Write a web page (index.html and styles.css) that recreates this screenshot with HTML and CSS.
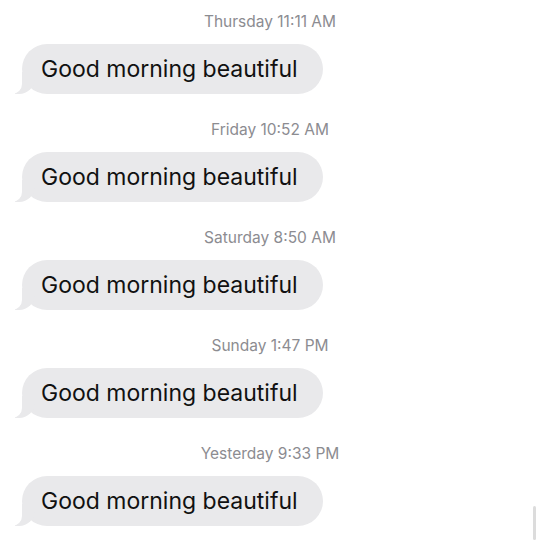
FILE: index.html
```html
<!DOCTYPE html>
<html lang="en">
<head>
  <meta charset="UTF-8" />
  <meta name="viewport" content="width=device-width, initial-scale=1" />
  <title>Messages</title>
  <link rel="stylesheet" href="styles.css">
</head>
<body>
  <div class="thread">
    <div class="group">
      <p class="stamp">Thursday 11:11 AM</p>
      <div class="bubble">Good morning beautiful</div>
    </div>
    <div class="group">
      <p class="stamp">Friday 10:52 AM</p>
      <div class="bubble">Good morning beautiful</div>
    </div>
    <div class="group">
      <p class="stamp">Saturday 8:50 AM</p>
      <div class="bubble">Good morning beautiful</div>
    </div>
    <div class="group">
      <p class="stamp">Sunday 1:47 PM</p>
      <div class="bubble">Good morning beautiful</div>
    </div>
    <div class="group">
      <p class="stamp">Yesterday 9:33 PM</p>
      <div class="bubble">Good morning beautiful</div>
    </div>
  </div>
  <div class="scrollbar"></div>
</body>
</html>
```

FILE: styles.css
```css
body {
  margin: 0;
  background-color: #fff;
  font-family: Inter, 'Liberation Sans', Arial, sans-serif;
  height: 540px;
  overflow: hidden;
}
.thread {
  display: flex;
  flex-direction: column;
  padding: 13px 0 0 22px;
}
.group {
  display: flex;
  flex-direction: column;
  align-items: flex-start;
  margin-bottom: 27px;
}
.stamp {
  margin: 0 0 13px;
  align-self: stretch;
  padding-right: 22px;
  text-align: center;
  font-size: 15.5px;
  line-height: 18px;
  color: #8c8c91;
}
.bubble {
  position: relative;
  height: 50px;
  line-height: 50px;
  padding: 0 25px 0 19px;
  border-radius: 25px;
  background-color: #e9e9eb;
  color: #111;
  font-size: 23px;
}
/* tail */
.bubble::before,
.bubble::after {
  content: "";
  position: absolute;
  bottom: 0;
  height: 22px;
}
.bubble::before {
  left: -7px;
  width: 20px;
  background-color: #e9e9eb;
  border-bottom-right-radius: 16px;
}
.bubble::after {
  left: -26px;
  width: 26px;
  background-color: #fff;
  border-bottom-right-radius: 10px;
}
.scrollbar {
  position: fixed;
  right: 4px;
  bottom: 0;
  width: 3px;
  height: 34px;
  border-radius: 2px;
  background-color: #dcdcdc;
}
```
